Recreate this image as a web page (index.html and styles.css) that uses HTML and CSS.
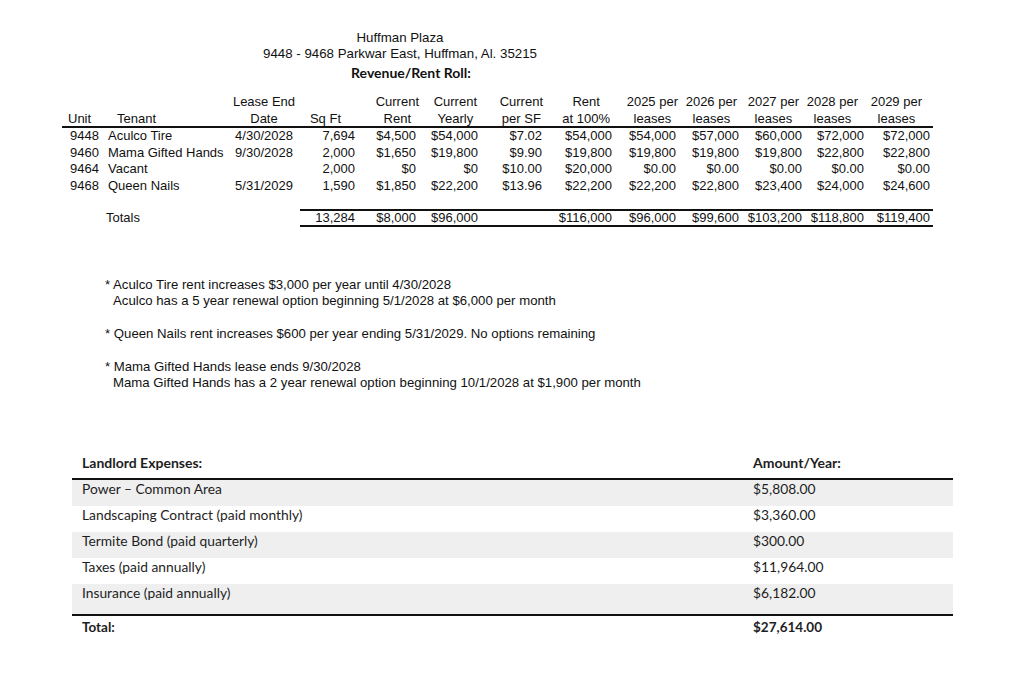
FILE: index.html
```html
<!DOCTYPE html>
<html>
<head>
<meta charset="utf-8">
<link rel="stylesheet" href="styles.css">
</head>
<body>
<div class="page">
  <div class="title">
    <div>Huffman Plaza</div>
    <div>9448 - 9468 Parkwar East, Huffman, Al. 35215</div>
    <div class="sub">Revenue/Rent Roll:</div>
  </div>

  <table class="rent">
    <colgroup>
      <col class="w42"><col class="w124"><col class="w72"><col class="w58"><col class="w61"><col class="w62"><col class="w64"><col class="w70"><col class="w64"><col class="w63"><col class="w63"><col class="w62"><col class="w66">
    </colgroup>
    <thead>
      <tr>
        <th class="h-unit"><span class="hb">Unit</span></th>
        <th class="h-tenant"><span class="hb">Tenant</span></th>
        <th class="h-date"><span class="hb">Lease End<br>Date</span></th>
        <th class="hr p17"><span class="hb">Sq Ft</span></th>
        <th class="hr p0"><span class="hb">Current<br>Rent</span></th>
        <th class="hr p4"><span class="hb">Current<br>Yearly</span></th>
        <th class="hr p2"><span class="hb">Current<br>per SF</span></th>
        <th class="hr p5"><span class="hb">Rent<br>at 100%</span></th>
        <th class="hr p1"><span class="hb">2025 per<br>leases</span></th>
        <th class="hr p5"><span class="hb">2026 per<br>leases</span></th>
        <th class="hr p6"><span class="hb">2027 per<br>leases</span></th>
        <th class="hr p9"><span class="hb">2028 per<br>leases</span></th>
        <th class="hr p11"><span class="hb">2029 per<br>leases</span></th>
      </tr>
    </thead>
    <tbody>
      <tr>
        <td class="unit">9448</td><td class="tenant">Aculco Tire</td><td class="date">4/30/2028</td>
        <td>7,694</td><td>$4,500</td><td>$54,000</td><td>$7.02</td><td>$54,000</td><td>$54,000</td><td>$57,000</td><td>$60,000</td><td>$72,000</td><td>$72,000</td>
      </tr>
      <tr>
        <td class="unit">9460</td><td class="tenant">Mama Gifted Hands</td><td class="date">9/30/2028</td>
        <td>2,000</td><td>$1,650</td><td>$19,800</td><td>$9.90</td><td>$19,800</td><td>$19,800</td><td>$19,800</td><td>$19,800</td><td>$22,800</td><td>$22,800</td>
      </tr>
      <tr>
        <td class="unit">9464</td><td class="tenant">Vacant</td><td class="date"></td>
        <td>2,000</td><td>$0</td><td>$0</td><td>$10.00</td><td>$20,000</td><td>$0.00</td><td>$0.00</td><td>$0.00</td><td>$0.00</td><td>$0.00</td>
      </tr>
      <tr>
        <td class="unit">9468</td><td class="tenant">Queen Nails</td><td class="date">5/31/2029</td>
        <td>1,590</td><td>$1,850</td><td>$22,200</td><td>$13.96</td><td>$22,200</td><td>$22,200</td><td>$22,800</td><td>$23,400</td><td>$24,000</td><td>$24,600</td>
      </tr>
      <tr class="spacer"><td colspan="13"></td></tr>
      <tr class="totals">
        <td></td><td class="tot-label">Totals</td><td></td>
        <td class="tl">13,284</td><td class="tl">$8,000</td><td class="tl">$96,000</td><td class="tl"></td><td class="tl">$116,000</td><td class="tl">$96,000</td><td class="tl">$99,600</td><td class="tl">$103,200</td><td class="tl">$118,800</td><td class="tl">$119,400</td>
      </tr>
    </tbody>
  </table>

  <div class="notes">
    <div class="note">
      <div>* Aculco Tire rent increases $3,000 per year until 4/30/2028</div>
      <div class="ind">Aculco has a 5 year renewal option beginning 5/1/2028 at $6,000 per month</div>
    </div>
    <div class="note">
      <div>* Queen Nails rent increases $600 per year ending 5/31/2029. No options remaining</div>
    </div>
    <div class="note">
      <div>* Mama Gifted Hands lease ends 9/30/2028</div>
      <div class="ind">Mama Gifted Hands has a 2 year renewal option beginning 10/1/2028 at $1,900 per month</div>
    </div>
  </div>

  <table class="exp">
    <colgroup><col class="ew1"><col class="ew2"></colgroup>
    <thead>
      <tr><th>Landlord Expenses:</th><th>Amount/Year:</th></tr>
    </thead>
    <tbody>
      <tr class="shade"><td>Power – Common Area</td><td>$5,808.00</td></tr>
      <tr><td>Landscaping Contract (paid monthly)</td><td>$3,360.00</td></tr>
      <tr class="shade"><td>Termite Bond (paid quarterly)</td><td>$300.00</td></tr>
      <tr><td>Taxes (paid annually)</td><td>$11,964.00</td></tr>
      <tr class="shade last"><td>Insurance (paid annually)</td><td>$6,182.00</td></tr>
    </tbody>
    <tfoot>
      <tr><td>Total:</td><td>$27,614.00</td></tr>
    </tfoot>
  </table>
</div>
</body>
</html>
```

FILE: styles.css
```css
html, body {
  margin: 0;
  padding: 0;
  background: #ffffff;
}

.page {
  padding-top: 30px;
  color: #111;
  font-family: "Liberation Sans", Arial, sans-serif;
  font-size: 13px;
}

.title {
  width: 676px;
  margin-left: 62px;
  text-align: center;
  line-height: 16px;
  font-size: 13.3px;
}

.title .sub {
  font-family: Lato, "Liberation Sans", sans-serif;
  font-weight: 700;
  font-size: 14px;
  margin-top: 3px;
  padding-left: 22px;
}

/* Rent roll table */
.rent {
  margin: 12px 0 0 62px;
  border-collapse: collapse;
  table-layout: fixed;
  width: 871px;
}

.w42 { width: 42px; }
.w124 { width: 124px; }
.w72 { width: 72px; }
.w58 { width: 58px; }
.w61 { width: 61px; }
.w62 { width: 62px; }
.w63 { width: 63px; }
.w64 { width: 64px; }
.w66 { width: 66px; }
.w70 { width: 70px; }

.rent th {
  font-weight: normal;
  line-height: 0;
  padding: 0;
  vertical-align: bottom;
  border-bottom: 2px solid #111;
  white-space: nowrap;
}

.rent .hb {
  display: inline-block;
  text-align: center;
  line-height: 17px;
  margin-bottom: -1px;
}

.rent .h-unit { text-align: left; padding-left: 6px; }
.rent .h-tenant { text-align: left; padding-left: 13px; }
.rent .h-date { text-align: center; }
.rent .hr { text-align: right; }
.p0 { padding-right: 0 !important; }
.p1 { padding-right: 1px !important; }
.p2 { padding-right: 2px !important; }
.p4 { padding-right: 4px !important; }
.p5 { padding-right: 5px !important; }
.p6 { padding-right: 6px !important; }
.p9 { padding-right: 9px !important; }
.p11 { padding-right: 11px !important; }
.p17 { padding-right: 17px !important; }

.rent td {
  padding: 0 3px 0 0;
  height: 16.5px;
  line-height: 16.5px;
  text-align: right;
  white-space: nowrap;
}

.rent td.unit { text-align: left; padding-left: 8px; }
.rent td.tenant { text-align: left; padding-left: 4px; }
.rent td.date { text-align: center; padding: 0; }

.rent .spacer td { height: 15px; }

.rent .totals td {
  height: 14px;
  line-height: 14px;
}

.rent .totals td.tl {
  border-top: 2px solid #111;
  border-bottom: 2px solid #111;
}

.rent td.tot-label { text-align: left; padding-left: 2px; }

/* Notes */
.notes {
  margin: 50px 0 0 105px;
  line-height: 16px;
  font-size: 13.2px;
}

.note + .note {
  margin-top: 17px;
}

.ind {
  padding-left: 8px;
}

/* Expenses table */
.exp {
  margin: 58px 0 0 72px;
  width: 881px;
  border-collapse: collapse;
  table-layout: fixed;
  font-family: Lato, "Liberation Sans", sans-serif;
  font-size: 13.8px;
  color: #1e1e1e;
}

.ew1 { width: 671px; }
.ew2 { width: 210px; }

.exp th {
  text-align: left;
  font-weight: 700;
  font-size: 14px;
  padding: 6px 10px 7px;
  line-height: 16px;
  border-bottom: 2px solid #111;
}

.exp td {
  padding: 1px 10px 9px;
  line-height: 16px;
}

.exp tr.shade td {
  background: #efefef;
}

.exp tr.last td {
  padding-bottom: 13px;
}

.exp tfoot td {
  border-top: 2px solid #111;
  font-weight: 700;
  font-size: 13.5px;
  padding-top: 3px;
  padding-bottom: 9px;
}
```
